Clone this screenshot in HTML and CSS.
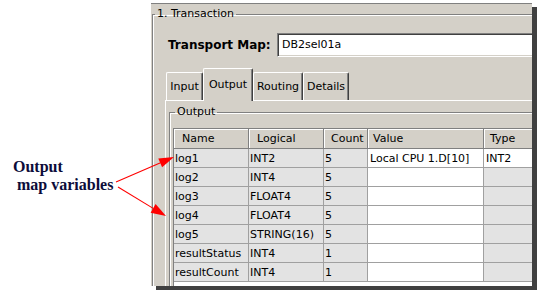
FILE: index.html
```html
<!DOCTYPE html>
<html>
<head>
<meta charset="utf-8">
<link rel="stylesheet" href="styles.css">
</head>
<body>
<div class="stage">
  <div class="win">
    <fieldset class="gb gb1">
      <legend>1. Transaction</legend>
      <div class="body1">
        <div class="maprow">
          <span class="maplabel">Transport Map:</span>
          <div class="field">DB2sel01a</div>
        </div>
        <div class="tabs">
          <div class="tab t-input">Input</div>
          <div class="tab sel t-output">Output</div>
          <div class="tab t-routing">Routing</div>
          <div class="tab t-details">Details</div>
        </div>
        <div class="panel">
          <fieldset class="gb gb2">
            <legend>Output</legend>
            <div class="grid">
              <table>
                <thead>
                  <tr>
                    <th class="c1">Name</th>
                    <th class="c2">Logical</th>
                    <th class="c3">Count</th>
                    <th class="c4">Value</th>
                    <th class="c5">Type</th>
                  </tr>
                </thead>
                <tbody>
                  <tr><td>log1</td><td>INT2</td><td>5</td><td class="v">Local CPU 1.D[10]</td><td class="t w">INT2</td></tr>
                  <tr><td>log2</td><td>INT4</td><td>5</td><td class="v"></td><td class="t"></td></tr>
                  <tr><td>log3</td><td>FLOAT4</td><td>5</td><td class="v"></td><td class="t"></td></tr>
                  <tr><td>log4</td><td>FLOAT4</td><td>5</td><td class="v"></td><td class="t"></td></tr>
                  <tr><td>log5</td><td>STRING(16)</td><td>5</td><td class="v"></td><td class="t"></td></tr>
                  <tr><td>resultStatus</td><td>INT4</td><td>1</td><td class="v"></td><td class="t"></td></tr>
                  <tr><td>resultCount</td><td>INT4</td><td>1</td><td class="v"></td><td class="t"></td></tr>
                </tbody>
              </table>
            </div>
          </fieldset>
        </div>
      </div>
    </fieldset>
  </div>
  <div class="note">Output<br><span class="note2">map variables</span></div>
  <svg class="arrows" width="551" height="303" viewBox="0 0 551 303">
    <line x1="116" y1="182" x2="160.5" y2="162.8" stroke="#f00" stroke-width="1.1"/>
    <polygon points="174,157 158.3,158.5 162.1,167.3" fill="#f00"/>
    <line x1="118" y1="187" x2="153.2" y2="208.4" stroke="#f00" stroke-width="1.1"/>
    <polygon points="166,216 150.6,212.7 155.6,204.1" fill="#f00"/>
  </svg>
</div>
</body>
</html>
```

FILE: styles.css
```css
html, body {
  margin: 0;
  padding: 0;
  background: #fff;
}

.stage {
  position: relative;
  width: 551px;
  height: 303px;
  box-sizing: border-box;
  padding: 3px 0 0 151px;
  overflow: hidden;
}

.win {
  width: 381px;
  height: 283px;
  box-sizing: border-box;
  background: #d4d0c8;
  border-top: 1px solid #808080;
  box-shadow: 5px 4px 0 #404040;
  overflow: hidden;
  font: 11px "DejaVu Sans", sans-serif;
  color: #000;
}

.gb {
  border: 1px solid #808080;
  box-shadow: inset 1px 1px 0 #fff;
  margin: 0;
  padding: 0;
  min-width: 0;
  box-sizing: border-box;
}

.gb legend {
  padding: 0 2px;
  line-height: 14px;
  height: 14px;
}

.gb1 {
  width: 440px;
  height: 330px;
  margin: 3px 0 0 1px;
}

.gb1 legend {
  margin-left: 2px;
}

.body1 {
  padding-left: 13px;
}

.maprow {
  display: flex;
  align-items: center;
  height: 24px;
  margin-top: 12px;
}

.maplabel {
  width: 111px;
  box-sizing: border-box;
  padding-left: 2px;
  font-weight: bold;
  font-size: 12px;
}

.field {
  width: 300px;
  height: 24px;
  box-sizing: border-box;
  background: #fff;
  border-top: 1px solid #808080;
  border-left: 1px solid #808080;
  border-bottom: 1px solid #fff;
  border-right: 1px solid #fff;
  box-shadow: inset 1px 1px 0 #404040, inset -1px -1px 0 #d4d0c8;
  padding-left: 4px;
  line-height: 22px;
}

.tabs {
  display: flex;
  align-items: flex-end;
  margin-top: 11px;
}

.tab {
  height: 28px;
  box-sizing: border-box;
  background: #d4d0c8;
  border-top: 1px solid #fff;
  border-left: 1px solid #fff;
  border-right: 1px solid #404040;
  box-shadow: inset -1px 0 0 #808080;
  border-radius: 2px 2px 0 0;
  text-align: center;
  line-height: 27px;
}

.t-input { width: 37px; }
.t-output { width: 50px; }
.t-routing { width: 50px; }
.t-details { width: 46px; }

.tab.sel {
  height: 33px;
  margin-bottom: -1px;
  line-height: 31px;
  position: relative;
  z-index: 1;
}

.panel {
  margin-left: -1px;
  border-top: 1px solid #fff;
  border-left: 1px solid #fff;
  height: 300px;
  padding-left: 3px;
}

.gb2 {
  width: 420px;
  height: 300px;
  margin-top: 4px;
  padding-left: 3px;
}

.grid {
  margin-top: 9px;
  border-top: 1px solid #808080;
  border-left: 1px solid #808080;
  background: #fff;
  height: 300px;
}

table {
  border-collapse: separate;
  border-spacing: 0;
  table-layout: fixed;
  width: 380px;
}

th {
  height: 20px;
  box-sizing: border-box;
  background: #d4d0c8;
  border-right: 1px solid #808080;
  border-bottom: 1px solid #808080;
  box-shadow: inset 1px 1px 0 #fff;
  font-weight: normal;
  text-align: left;
  padding: 0 0 0 8px;
  line-height: 18px;
  white-space: nowrap;
}

.c1 { width: 75px; }
.c2 { width: 75px; }
.c3 { width: 44px; padding-left: 7px; }
.c4 { width: 116px; padding-left: 5px; }
.c5 { width: 70px; padding-left: 6px; }

td {
  height: 19px;
  box-sizing: border-box;
  background: #e3e3e3;
  border-right: 1px solid #a0a0a0;
  border-bottom: 1px solid #a0a0a0;
  padding: 0 0 0 1px;
  line-height: 17px;
  white-space: nowrap;
  overflow: hidden;
}

td.v {
  background: #fff;
  padding-left: 2px;
}

td.t {
  padding-left: 2px;
}

td.w {
  background: #fff;
}

.note {
  position: absolute;
  left: 13px;
  top: 158px;
  font: bold 16px "Liberation Serif", serif;
  line-height: 18px;
  color: #0c0c3a;
  white-space: nowrap;
}

.note2 {
  padding-left: 4px;
}

.arrows {
  position: absolute;
  left: 0;
  top: 0;
  pointer-events: none;
}
```
